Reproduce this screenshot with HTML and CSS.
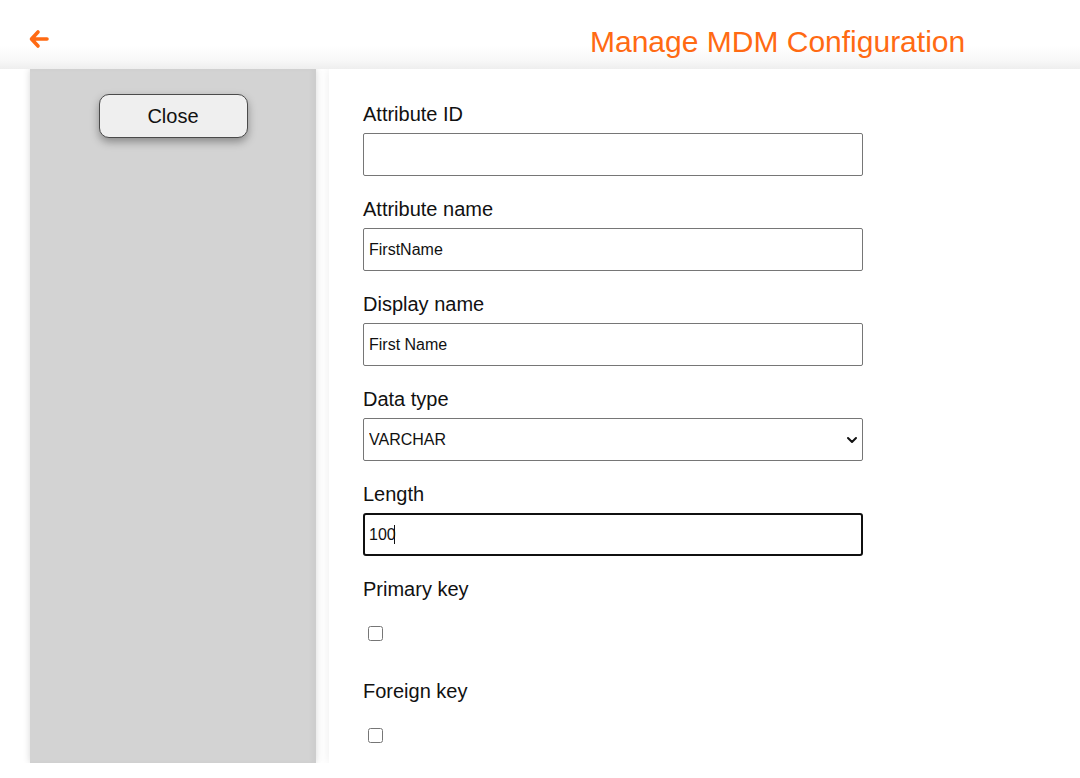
FILE: index.html
```html
<!DOCTYPE html>
<html>
<head>
<meta charset="utf-8">
<title>Manage MDM Configuration</title>
<link rel="stylesheet" href="styles.css">
</head>
<body>
<header class="topbar">
  <a class="back" href="#" aria-label="Back">
    <svg width="20" height="20" viewBox="0 0 20 20"><path d="M9 3 L2.5 10 L9 17 M3 10 H18" fill="none" stroke="#ff6a13" stroke-width="3.6" stroke-linecap="round" stroke-linejoin="round"/></svg>
  </a>
  <h1 class="title">Manage MDM Configuration</h1>
</header>
<main class="main">
  <aside class="sidebar">
    <button class="close-btn" type="button">Close</button>
  </aside>
  <section class="panel">
    <div class="field">
      <label class="label">Attribute ID</label>
      <input class="input" type="text" value="">
    </div>
    <div class="field">
      <label class="label">Attribute name</label>
      <input class="input" type="text" value="FirstName">
    </div>
    <div class="field">
      <label class="label">Display name</label>
      <input class="input" type="text" value="First Name">
    </div>
    <div class="field">
      <label class="label">Data type</label>
      <div class="select-wrap">
        <select class="input select"><option>VARCHAR</option></select>
        <svg class="chev" width="12" height="8" viewBox="0 0 12 8"><path d="M2 2 L6 6 L10 2" fill="none" stroke="#111" stroke-width="2" stroke-linecap="round" stroke-linejoin="round"/></svg>
      </div>
    </div>
    <div class="field">
      <label class="label">Length</label>
      <div class="focus-wrap">
        <input class="input focused" type="text" value="100">
        <span class="caret"></span>
      </div>
    </div>
    <div class="field check-field">
      <label class="label">Primary key</label>
      <div class="check-row"><input class="check" type="checkbox"></div>
    </div>
    <div class="field check-field">
      <label class="label">Foreign key</label>
      <div class="check-row"><input class="check" type="checkbox"></div>
    </div>
  </section>
</main>
</body>
</html>
```
FILE: styles.css
```css
* { box-sizing: border-box; }
html, body { margin: 0; padding: 0; background: #fff; }
body {
  font-family: "Liberation Sans", Arial, sans-serif;
  color: #111;
  width: 1080px;
  height: 778px;
  overflow: hidden;
}
.topbar {
  height: 69px;
  display: flex;
  align-items: flex-start;
  background: linear-gradient(to bottom, #ffffff 0, #ffffff 46px, #f8f8f8 60px, #eeeeee 69px);
}
.back {
  display: block;
  margin: 29px 0 0 29px;
  width: 20px;
  height: 20px;
}
.back svg { display: block; }
.title {
  margin: 25px 0 0 541px;
  font-size: 30px;
  font-weight: normal;
  line-height: 34px;
  color: #ff6a13;
  white-space: nowrap;
}
.main {
  display: flex;
  height: 694px;
  overflow: hidden;
  padding-left: 30px;
}
.sidebar {
  width: 286px;
  flex: none;
  background: #d3d3d3;
  box-shadow: 0 0 7px rgba(0,0,0,0.16), inset -4px 0 4px rgba(0,0,0,0.03);
  display: flex;
  flex-direction: column;
  align-items: center;
  padding-top: 25px;
  position: relative;
  z-index: 1;
}
.close-btn {
  width: 149px;
  height: 44px;
  border: 1px solid #4a4a4a;
  border-radius: 10px;
  background: #efefef;
  font-family: "Liberation Sans", Arial, sans-serif;
  font-size: 20px;
  color: #111;
  box-shadow: 0 4px 9px rgba(0,0,0,0.35);
  padding: 0;
}
.panel {
  flex: 1;
  margin-left: 13px;
  background: #fff;
  box-shadow: 0 0 10px rgba(0,0,0,0.08);
  padding: 32px 0 0 34px;
}
.field { margin-bottom: 20px; }
.label {
  display: block;
  font-size: 20px;
  line-height: 23px;
  padding-top: 2px;
  height: 25px;
  margin-bottom: 7px;
  color: #111;
}
.input {
  display: block;
  width: 500px;
  height: 43px;
  border: 1px solid #767676;
  border-radius: 2px;
  background: #fff;
  font-family: "Liberation Sans", Arial, sans-serif;
  font-size: 16px;
  color: #111;
  padding: 0 5px;
  margin: 0;
  outline: none;
}
.select-wrap, .focus-wrap { position: relative; width: 500px; }
.select {
  appearance: none;
  -webkit-appearance: none;
  padding-left: 5px;
}
.chev {
  position: absolute;
  right: 5px;
  top: 18px;
  pointer-events: none;
}
.focused {
  border: 2px solid #101010;
  border-radius: 3px;
  padding-left: 4px;
}
.caret {
  position: absolute;
  left: 31px;
  top: 12px;
  width: 1px;
  height: 19px;
  background: #111;
}
.check-field { margin-bottom: 36px; }
.check-row { padding-top: 18px; height: 34px; }
.check {
  display: block;
  width: 15px;
  height: 15px;
  margin: 0 0 0 5px;
}
```
